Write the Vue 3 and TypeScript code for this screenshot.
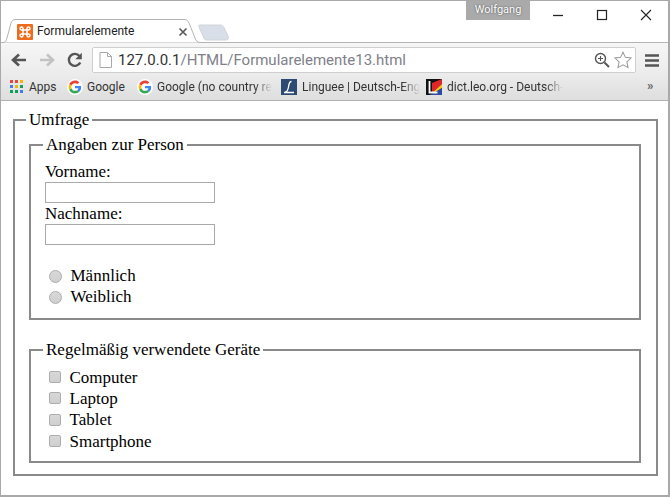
<script setup lang="ts">
const devices: string[] = ['Computer', 'Laptop', 'Tablet', 'Smartphone']
const genders: string[] = ['Männlich', 'Weiblich']
</script>

<template>
  <div class="window">
    <header class="titlebar">
      <div class="tab">
        <svg class="tab-shape" width="200" height="24" viewBox="0 0 200 24">
          <path d="M0 23.500 H2 C4 23.500 5 22 6 19 L10 4 C10.700 1.800 12 .5 15 .5 H183 C186 .5 187 2 188 4 L194 19 C195 22 196.500 23.500 199 23.500" fill="#fff" stroke="#b4b4b4" />
        </svg>
        <svg class="favicon" width="16" height="16" viewBox="0 0 16 16">
          <rect width="16" height="16" rx="1" fill="#ef6c1d" />
          <path d="M6 6H4.300a1.500 1.500 0 1 1 1.700-1.700V6zM10 6h1.700A1.500 1.500 0 1 0 10 4.300V6zM6 10H4.300A1.500 1.500 0 1 0 6 11.700V10zM10 10h1.700A1.500 1.500 0 1 1 10 11.700V10zM6 6h4v4H6z" fill="none" stroke="#fff" stroke-width="1.500" />
        </svg>
        <span class="tab-title">Formularelemente</span>
        <svg class="tab-close" width="10" height="10" viewBox="0 0 10 10">
          <path d="M1.500 1.500l7 7M8.500 1.500l-7 7" stroke="#5a5a5a" stroke-width="1.700" />
        </svg>
      </div>
      <svg class="new-tab" width="32" height="17" viewBox="0 0 32 17">
        <path d="M2 1 H22 C24 1 25 2 26 3.500 L30 12 C31 15 30 16 28 16 H9 C7 16 6 15 5.500 13 L1 3 C.5 1.500 1 1 2 1Z" fill="#d9dfe8" stroke="#d0d4da" />
      </svg>
      <div class="user">Wolfgang</div>
      <div class="controls">
        <svg width="44" height="14" viewBox="0 0 44 14"><path d="M17 7.500h10" stroke="#222" stroke-width="1.300" /></svg>
        <svg width="44" height="14" viewBox="0 0 44 14"><rect x="17.500" y="2.500" width="9" height="9" fill="none" stroke="#222" stroke-width="1.200" /></svg>
        <svg width="44" height="14" viewBox="0 0 44 14"><path d="M17 2l10 10M27 2l-10 10" stroke="#222" stroke-width="1.100" /></svg>
      </div>
    </header>

    <div class="toolbar">
      <svg class="nav" width="18" height="16" viewBox="0 0 18 16">
        <path d="M16 8H4M9 2.500 3 8l6 5.500" fill="none" stroke="#555" stroke-width="2.600" />
      </svg>
      <svg class="nav" width="18" height="16" viewBox="0 0 18 16">
        <path d="M2 8h12M9 2.500 15 8l-6 5.500" fill="none" stroke="#c2c2c2" stroke-width="2.600" />
      </svg>
      <svg class="nav" width="18" height="18" viewBox="0 0 18 18">
        <path d="M14.300 11.500A6 6 0 1 1 13.500 5" fill="none" stroke="#555" stroke-width="2.400" />
        <path d="M15.800 1.800v6.500H9.300z" fill="#555" />
      </svg>
      <div class="omnibox">
        <svg width="13" height="16" viewBox="0 0 13 16">
          <path d="M1 .5h7.500L12.500 4.500V15.500H1zM8.500 .5V4.500H12.500" fill="#fff" stroke="#a8a8a8" />
        </svg>
        <span class="url"><span class="host">127.0.0.1</span>/HTML/Formularelemente13.html</span>
        <svg class="zoom" width="16" height="16" viewBox="0 0 16 16">
          <circle cx="6.500" cy="6.500" r="5" fill="none" stroke="#555" stroke-width="1.400" />
          <path d="M4 6.500h5M6.500 4v5" stroke="#555" stroke-width="1.100" />
          <path d="M10.500 10.500 15 15" stroke="#555" stroke-width="2" />
        </svg>
        <svg width="18" height="18" viewBox="0 0 19 19">
          <path d="M9.500 1.200l2.500 5.500 6 .7-4.400 4.100 1.200 6L9.500 14.500l-5.300 3 1.200-6L1 7.400l6-.7z" fill="#fff" stroke="#9a9a9a" stroke-width="1.100" />
        </svg>
      </div>
      <svg class="menu" width="14" height="13" viewBox="0 0 14 13">
        <path d="M0 1.500h14M0 6.500h14M0 11.500h14" stroke="#555" stroke-width="2.400" />
      </svg>
    </div>

    <nav class="bookmarks">
      <div class="bm apps">
        <svg width="13" height="13" viewBox="0 0 13 13">
          <g fill="#e8453c"><rect width="3" height="3" /><rect x="5" width="3" height="3" /></g>
          <rect x="10" width="3" height="3" fill="#f4b400" />
          <rect y="5" width="3" height="3" fill="#3f7ee8" />
          <rect x="5" y="5" width="3" height="3" fill="#f4b400" />
          <rect x="10" y="5" width="3" height="3" fill="#0f9d58" />
          <rect y="10" width="3" height="3" fill="#0f9d58" />
          <rect x="5" y="10" width="3" height="3" fill="#0f9d58" />
          <rect x="10" y="10" width="3" height="3" fill="#3f7ee8" />
        </svg>
        <span>Apps</span>
      </div>
      <div class="bm google">
        <svg width="16" height="16" viewBox="-6 -6 60 60">
          <circle cx="24" cy="24" r="30" fill="#fff" />
          <path fill="#ea4335" d="M24 9.500c3.500 0 6.700 1.200 9.200 3.600l6.900-6.900C35.900 2.400 30.500 0 24 0 14.600 0 6.500 5.400 2.600 13.200l8 6.200C12.500 13.700 17.800 9.500 24 9.500z" />
          <path fill="#4285f4" d="M47 24.500c0-1.600-.1-3.100-.4-4.500H24v9h12.900c-.6 3-2.200 5.500-4.700 7.200l7.700 6C44.400 38 47 31.800 47 24.500z" />
          <path fill="#fbbc05" d="M10.600 28.600a14.500 14.500 0 0 1 0-9.200l-8-6.200a24 24 0 0 0 0 21.600z" />
          <path fill="#34a853" d="M24 48c6.500 0 11.900-2.100 15.900-5.800l-7.700-6c-2.200 1.500-4.900 2.300-8.200 2.300-6.200 0-11.500-4.200-13.400-9.900l-8 6.200C6.500 42.600 14.600 48 24 48z" />
        </svg>
        <span>Google</span>
      </div>
      <div class="bm google2">
        <svg width="16" height="16" viewBox="-6 -6 60 60">
          <circle cx="24" cy="24" r="30" fill="#fff" />
          <path fill="#ea4335" d="M24 9.500c3.500 0 6.700 1.200 9.200 3.600l6.900-6.900C35.900 2.400 30.500 0 24 0 14.600 0 6.500 5.400 2.600 13.200l8 6.200C12.500 13.700 17.800 9.500 24 9.500z" />
          <path fill="#4285f4" d="M47 24.500c0-1.600-.1-3.100-.4-4.500H24v9h12.900c-.6 3-2.200 5.500-4.700 7.200l7.700 6C44.400 38 47 31.800 47 24.500z" />
          <path fill="#fbbc05" d="M10.600 28.600a14.500 14.500 0 0 1 0-9.200l-8-6.200a24 24 0 0 0 0 21.600z" />
          <path fill="#34a853" d="M24 48c6.500 0 11.900-2.100 15.900-5.800l-7.700-6c-2.200 1.500-4.900 2.300-8.200 2.300-6.200 0-11.500-4.200-13.400-9.900l-8 6.200C6.500 42.600 14.600 48 24 48z" />
        </svg>
        <span class="fade">Google (no country re</span>
      </div>
      <div class="bm linguee">
        <svg width="16" height="16" viewBox="0 0 16 16">
          <rect width="16" height="16" fill="#2d4a73" />
          <path d="M10.500 2.500C8 2.500 8 5 7.500 8S6.500 13 4 13M3 13.500h10" fill="none" stroke="#fff" stroke-width="1.300" />
        </svg>
        <span class="fade">Linguee | Deutsch-Eng</span>
      </div>
      <div class="bm leo">
        <svg width="16" height="16" viewBox="0 0 16 16">
          <rect width="16" height="16" fill="#111" />
          <path d="M16 0v5L6 14V4z" fill="#e0262a" />
          <path d="M16 5v4L8 14H6z" fill="#f6c21c" />
          <path d="M8 14l8-5v7H3z" fill="#2a4aa8" />
          <path d="M3.500 2v11.500h8" fill="none" stroke="#fff" stroke-width="1.800" />
        </svg>
        <span class="fade">dict.leo.org - Deutsch-</span>
      </div>
      <span class="more">»</span>
    </nav>

    <main class="page">
      <form>
        <fieldset class="outer">
          <legend class="outer-legend">Umfrage</legend>
          <fieldset class="person">
            <legend>Angaben zur Person</legend>
            <div class="field">
              <label for="vn">Vorname:</label>
              <input id="vn" type="text" />
            </div>
            <div class="field">
              <label for="nn">Nachname:</label>
              <input id="nn" type="text" />
            </div>
            <div class="radios">
              <label v-for="g in genders" :key="g" class="choice">
                <input type="radio" name="g" />
                <span>{{ g }}</span>
              </label>
            </div>
          </fieldset>
          <fieldset class="devices">
            <legend>Regelmäßig verwendete Geräte</legend>
            <label v-for="d in devices" :key="d" class="choice check">
              <input type="checkbox" />
              <span>{{ d }}</span>
            </label>
          </fieldset>
        </fieldset>
      </form>
    </main>
  </div>
</template>

<style>
html, body { margin: 0; padding: 0; background: #fff; }
</style>

<style scoped>
.window {
  box-sizing: border-box;
  width: 670px;
  height: 497px;
  border: 1px solid #a9a9a9;
  border-right-width: 2px;
  border-bottom-width: 2px;
  display: flex;
  flex-direction: column;
  overflow: hidden;
  font-family: Roboto, "Open Sans", sans-serif;
  background: #fff;
}
.titlebar {
  position: relative;
  height: 41px;
  flex: none;
  display: flex;
  align-items: flex-start;
  border-bottom: 1px solid #b4b4b4;
}
.tab {
  position: relative;
  margin-top: 18px;
  width: 197px;
  height: 24px;
  z-index: 1;
  display: flex;
  align-items: center;
  padding-left: 16px;
  box-sizing: border-box;
  flex: none;
}
.tab-shape { position: absolute; left: 0; top: 0; }
.favicon { position: relative; flex: none; top: 1px; }
.tab-title {
  position: relative;
  margin-left: 4px;
  font-size: 12px;
  color: #222;
  width: 141px;
  flex: none;
}
.tab-close { position: relative; flex: none; margin-top: 2px; }
.new-tab { margin-top: 23px; flex: none; }
.user {
  position: absolute;
  left: 465px;
  top: 0;
  width: 64px;
  height: 19px;
  background: #aaa;
  color: #fff;
  font-size: 11px;
  line-height: 18px;
  text-align: center;
  text-shadow: 0 0 2px #444;
}
.controls {
  position: absolute;
  right: 0;
  top: 7px;
  display: flex;
}
.controls svg { display: block; }
.toolbar {
  height: 30px;
  flex: none;
  background: linear-gradient(#f6f6f6, #ececec);
  display: flex;
  align-items: center;
  padding: 4px 0 0 9px;
  box-sizing: border-box;
}
.nav { flex: none; margin-right: 10px; }
.nav:nth-child(3) { margin-right: 8px; }
.omnibox {
  box-sizing: border-box;
  width: 544px;
  height: 26px;
  background: #fff;
  border: 1px solid #cfcfcf;
  border-radius: 2px;
  display: flex;
  align-items: center;
  padding: 0 3px 0 6px;
  flex: none;
}
.url {
  margin-left: 6px;
  flex: 1;
  font-size: 15px;
  color: #80808a;
  white-space: nowrap;
}
.host { color: #333; }
.zoom { margin-right: 4px; }
.menu { margin-left: 9px; flex: none; }
.bookmarks {
  height: 28px;
  flex: none;
  box-sizing: border-box;
  background: linear-gradient(#ececec, #dedede);
  border-bottom: 1px solid #b0b0b0;
  display: flex;
  align-items: center;
  padding-left: 9px;
  font-size: 12px;
  color: #333;
  position: relative;
}
.bm { display: flex; align-items: center; gap: 5px; flex: none; overflow: hidden; }
.bm span { white-space: nowrap; }
.apps { width: 57px; gap: 6px; }
.google { width: 70px; gap: 4px; }
.google2 { width: 144px; gap: 4px; }
.linguee { width: 145px; }
.leo { width: 140px; }
.fade {
  -webkit-mask-image: linear-gradient(90deg, #000 85%, transparent 100%);
  mask-image: linear-gradient(90deg, #000 85%, transparent 100%);
}
.more { position: absolute; left: 646px; top: 5px; font-size: 13px; font-weight: 700; color: #666; }
.page {
  flex: 1;
  padding: 9px 12px 0;
  font-family: "Liberation Serif", serif;
  font-size: 17px;
  line-height: 20.500px;
  color: #000;
}
fieldset {
  margin: 0;
  border: 2px solid #8a8a8a;
  min-width: 0;
}
legend { padding: 0 3px; margin-left: -2px; }
.outer-legend { margin-left: -3px; }
.outer {
  box-sizing: border-box;
  width: 645px;
  height: 366px;
  padding: 4px 15px 0 14px;
}
.person {
  box-sizing: border-box;
  height: 185px;
  padding: 6px 14px 0;
}
.field label { display: block; line-height: 21px; }
.field input {
  display: block;
  box-sizing: border-box;
  width: 169.500px;
  height: 21px;
  margin: 0;
  border: 1px solid #a9a9a9;
  background: #fff;
}
.radios { margin-top: 20.500px; }
.choice { display: flex; align-items: center; height: 21px; }
.choice input {
  appearance: none;
  -webkit-appearance: none;
  margin: 0 0 0 4px;
  width: 12px;
  height: 12px;
  border: 1px solid #adadad;
  background: linear-gradient(#d8d8d8, #cfcfcf);
  box-sizing: border-box;
  flex: none;
}
.choice input[type="radio"] { border-radius: 50%; width: 13px; height: 13px; }
.choice input[type="checkbox"] { border-radius: 2px; position: relative; top: -1px; }
.choice span { margin-left: 8.500px; }
.devices {
  box-sizing: border-box;
  height: 123px;
  margin-top: 20px;
  padding: 7.500px 14px 0;
}
.check { height: 21.300px; }
</style>
